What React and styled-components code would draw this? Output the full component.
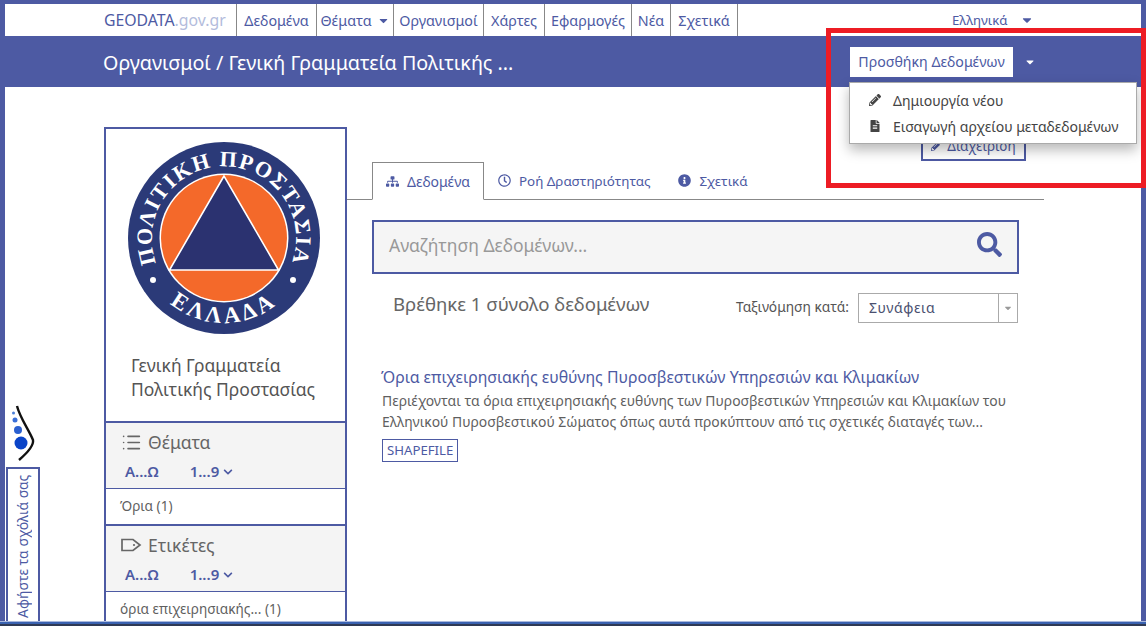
import React from 'react';
import styled, { createGlobalStyle } from 'styled-components';
import {
  FaCaretDown,
  FaChevronDown,
  FaFileAlt,
  FaInfoCircle,
  FaPencilAlt,
  FaRegClock,
  FaSearch,
  FaSitemap,
} from 'react-icons/fa';
import { List } from 'lucide-react';

const BLUE = '#4d5aa3';
const TEXT = '#5f5f5f';

const GlobalStyle = createGlobalStyle`
  html, body {
    margin: 0;
    padding: 0;
    background: #fff;
    overflow: hidden;
  }
  body {
    font-family: 'Noto Sans', 'Open Sans', sans-serif;
    color: ${TEXT};
  }
`;

const NAV_ITEMS = [
  { label: 'Δεδομένα', width: 80 },
  { label: 'Θέματα', width: 77, caret: true },
  { label: 'Οργανισμοί', width: 90 },
  { label: 'Χάρτες', width: 61 },
  { label: 'Εφαρμογές', width: 87 },
  { label: 'Νέα', width: 39 },
  { label: 'Σχετικά', width: 67 },
];

const TABS = [
  { label: 'Δεδομένα', Icon: FaSitemap, active: true },
  { label: 'Ροή Δραστηριότητας', Icon: FaRegClock },
  { label: 'Σχετικά', Icon: FaInfoCircle },
];

function Logo() {
  return (
    <svg width="200" height="200" viewBox="0 0 200 200">
      <defs>
        <path id="arcTop" d="M 31 121 A 72 72 0 1 1 169 121" />
        <path id="arcBottom" d="M 38 158 A 85 85 0 0 0 162 158" />
      </defs>
      <circle cx="100" cy="100" r="96" fill="#2b3a78" />
      <circle cx="100" cy="100" r="64.5" fill="#fff" />
      <circle cx="100" cy="100" r="63" fill="#f4692a" />
      <polygon points="100,38 45.5,132 154.5,132" fill="#2b3270" stroke="#fff" strokeWidth="1.6" />
      <LogoText fontSize="22" letterSpacing="1.5">
        <textPath href="#arcTop" startOffset="50%" textAnchor="middle">
          ΠΟΛΙΤΙΚΗ ΠΡΟΣΤΑΣΙΑ
        </textPath>
      </LogoText>
      <LogoText fontSize="23" letterSpacing="3.5">
        <textPath href="#arcBottom" startOffset="50%" textAnchor="middle">
          ΕΛΛΑΔΑ
        </textPath>
      </LogoText>
      <circle cx="29" cy="142" r="3" fill="#fff" />
      <circle cx="169" cy="142" r="3" fill="#fff" />
    </svg>
  );
}

function TagIcon() {
  return (
    <svg width="21" height="14" viewBox="0 0 21 14">
      <path d="M1 1.5 H12 L19 7 L12 12.5 H1 Z" fill="none" stroke="#666" strokeWidth="1.7" />
      <circle cx="13" cy="7" r="1.1" fill="#666" />
    </svg>
  );
}

function FacetBlock({ icon, title, children }) {
  return (
    <>
      <FacetHead>
        <FacetTitle>
          <FacetIcon>{icon}</FacetIcon>
          <span>{title}</span>
        </FacetTitle>
        <FacetSort>
          <span>Α...Ω</span>
          <span>
            1...9 <FaChevronDown size={10} />
          </span>
        </FacetSort>
      </FacetHead>
      <FacetItem>{children}</FacetItem>
    </>
  );
}

export default function App() {
  return (
    <Frame>
      <GlobalStyle />
      <TopNav>
        <Brand>
          GEODATA<BrandLight>.gov.gr</BrandLight>
        </Brand>
        <NavList>
          {NAV_ITEMS.map(({ label, width, caret }) => (
            <NavItem key={label} $width={width}>
              {label}
              {caret && <FaCaretDown size={13} />}
            </NavItem>
          ))}
        </NavList>
        <Lang>
          Ελληνικά
          <FaCaretDown size={14} />
        </Lang>
      </TopNav>

      <TitleBar>
        <PageTitle>Οργανισμοί / Γενική Γραμματεία Πολιτικής ...</PageTitle>
        <AddButton>Προσθήκη Δεδομένων</AddButton>
        <AddCaret>
          <FaCaretDown size={12} />
        </AddCaret>
      </TitleBar>

      <Body>
        <Sidebar>
          <LogoBox>
            <Logo />
            <OrgName>
              Γενική Γραμματεία
              <br />
              Πολιτικής Προστασίας
            </OrgName>
          </LogoBox>
          <FacetBlock icon={<List size={21} strokeWidth={1.8} color="#666" />} title="Θέματα">
            Όρια (1)
          </FacetBlock>
          <FacetBlock icon={<TagIcon />} title="Ετικέτες">
            όρια επιχειρησιακής... (1)
          </FacetBlock>
        </Sidebar>

        <Main>
          <ManageRow>
            <ManageButton>
              <FaPencilAlt size={11} />
              Διαχείριση
            </ManageButton>
          </ManageRow>
          <Tabs>
            {TABS.map(({ label, Icon, active }) => (
              <Tab key={label} $active={active}>
                <Icon size={13} />
                {label}
              </Tab>
            ))}
          </Tabs>
          <Content>
            <SearchBox>
              <span>Αναζήτηση Δεδομένων...</span>
              <FaSearch size={25} color={BLUE} />
            </SearchBox>
            <ResultBar>
              <ResultCount>Βρέθηκε 1 σύνολο δεδομένων</ResultCount>
              <SortLabel>Ταξινόμηση κατά:</SortLabel>
              <SortSelect>
                <SortValue>Συνάφεια</SortValue>
                <SortArrow>
                  <FaCaretDown size={10} />
                </SortArrow>
              </SortSelect>
            </ResultBar>
            <Dataset>
              <DatasetTitle>
                Όρια επιχειρησιακής ευθύνης Πυροσβεστικών Υπηρεσιών και Κλιμακίων
              </DatasetTitle>
              <DatasetText>
                Περιέχονται τα όρια επιχειρησιακής ευθύνης των Πυροσβεστικών Υπηρεσιών και Κλιμακίων του
                <br />
                Ελληνικού Πυροσβεστικού Σώματος όπως αυτά προκύπτουν από τις σχετικές διαταγές των...
              </DatasetText>
              <FormatTag>SHAPEFILE</FormatTag>
            </Dataset>
          </Content>
        </Main>
      </Body>

      <AddMenu>
        <MenuItem $gap={12}>
          <FaPencilAlt size={12} />
          <span>Δημιουργία νέου</span>
        </MenuItem>
        <MenuItem $gap={12}>
          <FaFileAlt size={12} />
          <span>Εισαγωγή αρχείου μεταδεδομένων</span>
        </MenuItem>
      </AddMenu>

      <Highlight />

      <Feedback>
        <FeedbackMark width="28" height="58" viewBox="0 0 28 58">
          <path d="M5 2 C8 14 17 26 21 36 C22 42 14 50 7 56" fill="none" stroke="#111" strokeWidth="2.4" />
          <circle cx="9" cy="39" r="6.5" fill="#0a44c8" />
          <circle cx="6" cy="26" r="4" fill="#2a5fd0" />
          <circle cx="3" cy="16" r="2.5" fill="#3a6fd8" />
          <circle cx="1.5" cy="9" r="1.5" fill="#4a7fd8" />
        </FeedbackMark>
        <FeedbackTab>
          <FeedbackLabel>Αφήστε τα σχόλιά σας</FeedbackLabel>
        </FeedbackTab>
      </Feedback>
    </Frame>
  );
}

const Frame = styled.div`
  position: relative;
  box-sizing: border-box;
  width: 1146px;
  height: 626px;
  border: solid ${BLUE};
  border-width: 4px 5px 5px 5px;
  background: #fff;
  font-size: 14px;

  &::after {
    content: '';
    position: absolute;
    left: -5px;
    right: -5px;
    bottom: -5px;
    height: 5px;
    background: linear-gradient(#a9b8dc 20%, #3a62b0 20% 60%, #2f3a55 60%);
  }
`;

const TopNav = styled.header`
  display: flex;
  align-items: stretch;
  height: 32px;
  padding-left: 99px;
`;

const Brand = styled.div`
  width: 132px;
  line-height: 32px;
  font-size: 15.8px;
  color: ${BLUE};
`;

const BrandLight = styled.span`
  color: #b3bcdc;
`;

const NavList = styled.nav`
  display: flex;
  border-right: 1px solid #888;
`;

const NavItem = styled.a`
  display: flex;
  align-items: center;
  justify-content: center;
  gap: 5px;
  box-sizing: border-box;
  width: ${({ $width }) => $width}px;
  border-left: 1px solid #888;
  font-size: 14.3px;
  color: ${BLUE};
`;

const Lang = styled.div`
  display: flex;
  align-items: center;
  gap: 13px;
  margin-left: 214px;
  font-size: 13.2px;
  color: ${BLUE};
`;

const TitleBar = styled.div`
  display: flex;
  align-items: center;
  height: 51px;
  padding-left: 98px;
  background: ${BLUE};
`;

const PageTitle = styled.h1`
  width: 747px;
  margin: 2px 0 0;
  font-size: 19.7px;
  font-weight: 400;
  color: #fff;
`;

const AddButton = styled.button`
  width: 163px;
  height: 30px;
  padding: 0;
  border: 0;
  background: #fff;
  font: inherit;
  font-size: 14.2px;
  color: ${BLUE};
`;

const AddCaret = styled.span`
  display: flex;
  margin-left: 11px;
  color: #fff;
`;

const Body = styled.div`
  display: flex;
  align-items: flex-start;
  height: 534px;
  overflow: hidden;
  padding: 40px 0 0 99px;
  box-sizing: border-box;
`;

const Sidebar = styled.aside`
  box-sizing: border-box;
  width: 243px;
  border: solid ${BLUE};
  border-width: 2px 2px 0;
`;

const LogoBox = styled.div`
  height: 292px;
  padding: 9px 0 0 18px;
  box-sizing: border-box;
`;

const LogoText = styled.text`
  font-family: 'Liberation Serif', serif;
  font-weight: 700;
  fill: #fff;
`;

const OrgName = styled.div`
  margin: 11px 0 0 7px;
  font-size: 17.5px;
  line-height: 24px;
  color: #555;
`;

const FacetHead = styled.div`
  box-sizing: border-box;
  height: 68px;
  padding: 7px 0 0 15px;
  border-top: 2px solid ${BLUE};
  border-bottom: 1px solid ${BLUE};
  background: #f4f4f4;
`;

const FacetTitle = styled.div`
  display: flex;
  align-items: center;
  gap: 6px;
  height: 24px;
  font-size: 17.5px;
  color: #666;
`;

const FacetIcon = styled.span`
  display: flex;
  align-items: center;
  justify-content: center;
  width: 21px;
`;

const FacetSort = styled.div`
  display: flex;
  gap: 31px;
  margin-top: 7px;
  padding-left: 4px;
  font-size: 15px;
  font-weight: 600;
  color: ${BLUE};
`;

const FacetItem = styled.div`
  height: 35px;
  padding-left: 14px;
  font-size: 13.6px;
  line-height: 33px;
  color: ${TEXT};
`;

const Main = styled.main`
  width: 697px;
`;

const ManageRow = styled.div`
  display: flex;
  justify-content: flex-end;
  box-sizing: border-box;
  height: 32px;
  padding: 3px 18px 0 0;
`;

const ManageButton = styled.button`
  display: flex;
  align-items: center;
  justify-content: center;
  gap: 5px;
  box-sizing: border-box;
  width: 105px;
  height: 31px;
  padding: 0;
  border: 2px solid ${BLUE};
  background: #fff;
  font: inherit;
  font-size: 13.5px;
  color: ${BLUE};
`;

const Tabs = styled.div`
  display: flex;
  height: 37px;
  margin-top: 3px;
  padding-left: 25px;
  border-bottom: 1px solid #888;
`;

const Tab = styled.div`
  display: flex;
  align-items: center;
  gap: 8px;
  box-sizing: border-box;
  height: ${({ $active }) => ($active ? 38 : 37)}px;
  padding: 0 13px;
  border: 1px solid ${({ $active }) => ($active ? '#888' : 'transparent')};
  border-bottom-color: ${({ $active }) => ($active ? '#fff' : 'transparent')};
  background: ${({ $active }) => ($active ? '#fff' : 'transparent')};
  font-size: ${({ $active }) => ($active ? 14 : 13.4)}px;
  color: ${BLUE};
`;

const Content = styled.div`
  padding: 20px 0 0 25px;
`;

const SearchBox = styled.div`
  display: flex;
  align-items: center;
  justify-content: space-between;
  box-sizing: border-box;
  width: 647px;
  height: 54px;
  padding: 0 15px 5px 15px;
  border: 2px solid ${BLUE};
  background: #f5f5f5;
  font-size: 17.5px;
  color: #999;
`;

const ResultBar = styled.div`
  display: flex;
  align-items: center;
  width: 646px;
  height: 30px;
  margin-top: 19px;
`;

const ResultCount = styled.div`
  flex: 1;
  padding-left: 21px;
  margin-top: -10px;
  font-size: 18.6px;
  color: #666;
`;

const SortLabel = styled.span`
  margin: -3px 9px 0 0;
  font-size: 13.75px;
  color: #555;
`;

const SortSelect = styled.div`
  display: flex;
  box-sizing: border-box;
  width: 160px;
  height: 30px;
  border: 1px solid #aaa;
`;

const SortValue = styled.span`
  flex: 1;
  padding-left: 10px;
  font-size: 14px;
  line-height: 27px;
  letter-spacing: 0.6px;
  color: #4a5070;
`;

const SortArrow = styled.span`
  display: flex;
  align-items: center;
  justify-content: center;
  width: 18px;
  border-left: 1px solid #aaa;
  color: #999;
`;

const Dataset = styled.article`
  padding: 43px 0 0 10px;
`;

const DatasetTitle = styled.h3`
  margin: 0 0 0 -1px;
  font-size: 15.85px;
  font-weight: 400;
  line-height: 22px;
  color: ${BLUE};
`;

const DatasetText = styled.p`
  margin: 2px 0 0;
  font-size: 13.9px;
  line-height: 21px;
  color: ${TEXT};
`;

const FormatTag = styled.span`
  display: inline-block;
  margin-top: 7px;
  padding: 0 4px;
  border: 1px solid ${BLUE};
  font-size: 13.2px;
  line-height: 21px;
  color: ${BLUE};
`;

const AddMenu = styled.div`
  position: absolute;
  top: 78px;
  left: 844px;
  box-sizing: border-box;
  width: 288px;
  height: 62px;
  padding: 4px 0;
  border: 1px solid #aaa;
  background: #fff;
  box-shadow: 0 6px 12px rgba(0, 0, 0, 0.28);
`;

const MenuItem = styled.div`
  display: flex;
  align-items: center;
  gap: ${({ $gap }) => $gap}px;
  height: 26px;
  padding-left: 19px;
  font-size: 14.05px;
  color: #444;
`;

const Highlight = styled.div`
  position: absolute;
  top: 24px;
  left: 821px;
  box-sizing: border-box;
  width: 320px;
  height: 160px;
  border: 5px solid #ed1c24;
  pointer-events: none;
`;

const Feedback = styled.div`
  position: absolute;
  left: 1px;
  bottom: 0;
  display: flex;
  flex-direction: column;
  width: 34px;
`;

const FeedbackMark = styled.svg`
  display: block;
  margin: 0 0 5px 6px;
`;

const FeedbackTab = styled.div`
  box-sizing: border-box;
  height: 154px;
  border: solid ${BLUE};
  border-width: 2px 2px 0;
  background: #fff;
`;

const FeedbackLabel = styled.div`
  box-sizing: border-box;
  width: 30px;
  height: 152px;
  padding-top: 3px;
  writing-mode: vertical-rl;
  transform: rotate(180deg);
  font-size: 13.9px;
  line-height: 30px;
  white-space: nowrap;
  color: ${BLUE};
`;
